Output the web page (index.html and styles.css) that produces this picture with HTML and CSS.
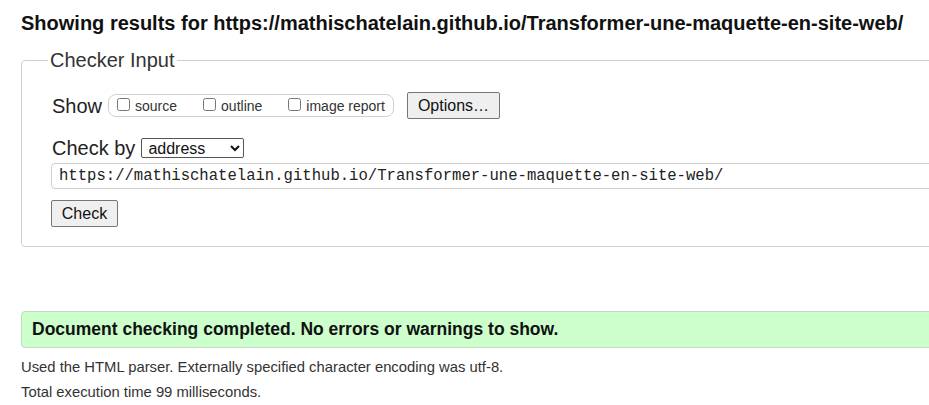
FILE: index.html
```html
<!DOCTYPE html>
<html lang="en">
<head>
<meta charset="utf-8">
<title>Showing results</title>
<link rel="stylesheet" href="styles.css">
</head>
<body>
<h2 class="title">Showing results for https://mathischatelain.github.io/Transformer-une-maquette-en-site-web/</h2>
<fieldset class="checker">
  <legend class="legend">Checker Input</legend>
  <div class="row show-row">
    <span class="label">Show</span>
    <span class="group">
      <label class="opt"><input type="checkbox" class="cb"><span>source</span></label>
      <label class="opt"><input type="checkbox" class="cb"><span>outline</span></label>
      <label class="opt"><input type="checkbox" class="cb"><span>image report</span></label>
    </span>
    <button class="btn options">Options…</button>
  </div>
  <div class="row by-row">
    <span class="label">Check by</span>
    <select class="sel"><option>address</option></select>
  </div>
  <input class="url" type="text" value="https://mathischatelain.github.io/Transformer-une-maquette-en-site-web/">
  <div class="check-row"><button class="btn check">Check</button></div>
</fieldset>
<div class="success">Document checking completed. No errors or warnings to show.</div>
<p class="note">Used the HTML parser. Externally specified character encoding was utf-8.</p>
<p class="note">Total execution time 99 milliseconds.</p>
</body>
</html>
```
FILE: styles.css
```css
html, body {
  overflow: hidden;
}
body {
  margin: 0;
  padding: 0 0 0 21px;
  width: 1100px;
  background: #fff;
  font-family: "Liberation Sans", Arial, sans-serif;
  color: #222;
}
.title {
  margin: 0;
  padding-top: 11px;
  font-size: 20px;
  line-height: 24px;
  font-weight: bold;
  color: #111;
}
.checker {
  margin: 13px 0 0 0;
  padding: 0 0 19px 30px;
  width: 1000px;
  border: 1px solid #cfcfcf;
  border-radius: 4px;
}
.legend {
  margin-left: -4px;
  padding: 0 2px;
  font-size: 20px;
  line-height: 24px;
  color: #333;
}
.row {
  display: flex;
  align-items: center;
}
.show-row {
  margin-top: 20px;
  height: 27px;
}
.label {
  font-size: 20px;
  line-height: 24px;
  color: #222;
}
.group {
  display: flex;
  align-items: center;
  margin-left: 6px;
  height: 21px;
  padding: 0 8px 0 8px;
  border: 1px solid #cfcfcf;
  border-radius: 8px;
}
.opt {
  display: flex;
  align-items: center;
  font-size: 14px;
  color: #333;
  margin-right: 26px;
}
.opt:last-child {
  margin-right: 0;
}
.cb {
  margin: 0 5px 2px 0;
  width: 13px;
  height: 13px;
}
.btn {
  font-family: "Liberation Sans", Arial, sans-serif;
  font-size: 16px;
  color: #111;
  background: #efefef;
  border: 1px solid #767676;
  border-radius: 2px;
  height: 27px;
  padding: 0 10px;
}
.options {
  margin-left: 13px;
  width: 93px;
}
.by-row {
  margin-top: 17px;
  height: 24px;
}
.sel {
  margin-left: 6px;
  width: 103px;
  height: 20px;
  font-family: "Liberation Sans", Arial, sans-serif;
  font-size: 16px;
  color: #111;
  border: 1px solid #555;
  border-radius: 2px;
  background: #fff;
  padding: 0 2px;
}
.url {
  display: block;
  box-sizing: border-box;
  margin: 3px 0 0 -1px;
  width: 1000px;
  height: 26px;
  padding: 0 7px;
  border: 1px solid #cfcfcf;
  border-radius: 4px;
  font-family: "Liberation Mono", "DejaVu Sans Mono", monospace;
  font-size: 15.6px;
  color: #222;
  background: #fff;
}
.check-row {
  margin-top: 11px;
  margin-left: -1px;
}
.check {
  width: 67px;
  padding: 0;
}
.success {
  box-sizing: border-box;
  margin-top: 64px;
  width: 1000px;
  height: 37px;
  padding: 0 10px;
  display: flex;
  align-items: center;
  background: #ccffcc;
  border: 1px solid #c3d9c3;
  border-radius: 4px;
  font-size: 17.5px;
  font-weight: bold;
  color: #111;
}
.note {
  margin: 0;
  font-size: 14.8px;
  line-height: 25px;
  color: #333;
}
.success + .note {
  margin-top: 7px;
}
```
